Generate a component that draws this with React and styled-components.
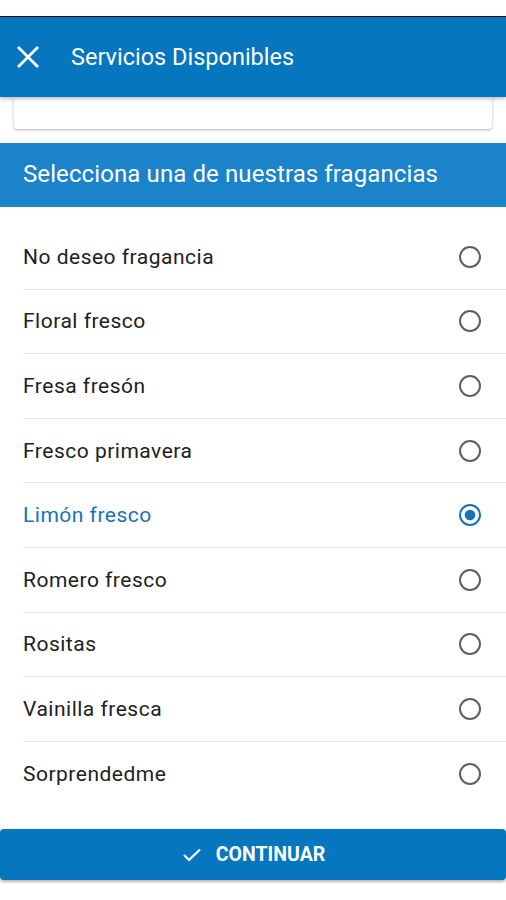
import React, { useState } from 'react';
import styled, { createGlobalStyle } from 'styled-components';

const GlobalStyle = createGlobalStyle`
  html, body {
    margin: 0;
    padding: 0;
    background: #ffffff;
    font-family: Roboto, "Noto Sans", "Liberation Sans", sans-serif;
  }
  * { box-sizing: border-box; }
`;

const Screen = styled.div`
  width: 506px;
  height: 900px;
  display: flex;
  flex-direction: column;
  background: #ffffff;
  overflow: hidden;
`;

const StatusGap = styled.div`
  height: 17px;
  border-bottom: 1.5px solid #111;
  flex-shrink: 0;
`;

const AppBar = styled.header`
  height: 80px;
  background: #0676be;
  display: flex;
  align-items: center;
  padding: 0 17px;
  gap: 32px;
  position: relative;
  z-index: 2;
  box-shadow: 0 2px 4px rgba(0, 0, 0, 0.25);
  flex-shrink: 0;
`;

const Title = styled.h1`
  margin: 0;
  color: #ffffff;
  font-size: 23.5px;
  font-weight: 400;
`;

const Card = styled.div`
  margin: 0 14px;
  height: 32px;
  background: #ffffff;
  border-radius: 0 0 4px 4px;
  box-shadow: 0 1px 3px rgba(0, 0, 0, 0.3);
  flex-shrink: 0;
`;

const SectionHeader = styled.div`
  margin-top: 14px;
  height: 64px;
  background: #1a83c9;
  display: flex;
  align-items: center;
  padding: 0 23px 2px;
  color: #ffffff;
  font-size: 24px;
  letter-spacing: 0.1px;
  flex-shrink: 0;
`;

const List = styled.ul`
  list-style: none;
  margin: 0;
  padding: 18px 0 0 23px;
`;

const Row = styled.li`
  height: 64.6px;
  display: flex;
  align-items: center;
  justify-content: space-between;
  padding: 0 24px 0 0;
  border-bottom: ${({ $last }) => ($last ? 'none' : '1.5px solid #e4e4e4')};
  cursor: pointer;
`;

const Label = styled.span`
  font-size: 21px;
  color: ${({ $active }) => ($active ? '#1673b9' : '#212121')};
  letter-spacing: 0.5px;
`;

const Footer = styled.div`
  margin-top: auto;
  padding-bottom: 20px;
`;

const Button = styled.button`
  width: 100%;
  height: 51px;
  border: none;
  border-radius: 4px;
  background: #0676be;
  color: #ffffff;
  display: flex;
  align-items: center;
  justify-content: center;
  gap: 15px;
  padding-right: 4px;
  font-family: Roboto, "Liberation Sans", sans-serif;
  font-size: 19.5px;
  font-weight: 700;
  box-shadow: 0 2px 3px rgba(0, 0, 0, 0.3);
`;

const CloseIcon = () => (
  <svg width="22" height="22" viewBox="0 0 22 22">
    <path d="M2 2 L20 20 M20 2 L2 20" stroke="#fff" strokeWidth="2.8" strokeLinecap="square" />
  </svg>
);

const CheckIcon = () => (
  <svg width="18" height="14" viewBox="0 0 18 14">
    <path d="M1 7 L6 12 L17 1.5" stroke="#fff" strokeWidth="2.2" fill="none" />
  </svg>
);

const Radio = ({ checked }) => (
  <svg width="24" height="24" viewBox="0 0 24 24">
    <circle cx="12" cy="12" r="10" fill="none" stroke={checked ? '#1673b9' : '#5f5f5f'} strokeWidth="2" />
    {checked && <circle cx="12" cy="12" r="5.3" fill="#1673b9" />}
  </svg>
);

const fragrances = [
  'No deseo fragancia',
  'Floral fresco',
  'Fresa fresón',
  'Fresco primavera',
  'Limón fresco',
  'Romero fresco',
  'Rositas',
  'Vainilla fresca',
  'Sorprendedme',
];

export default function App() {
  const [selected, setSelected] = useState('Limón fresco');

  return (
    <Screen>
      <GlobalStyle />
      <StatusGap />
      <AppBar>
        <CloseIcon />
        <Title>Servicios Disponibles</Title>
      </AppBar>
      <Card />
      <SectionHeader>Selecciona una de nuestras fragancias</SectionHeader>
      <List>
        {fragrances.map((name, i) => (
          <Row key={name} $last={i === fragrances.length - 1} onClick={() => setSelected(name)}>
            <Label $active={selected === name}>{name}</Label>
            <Radio checked={selected === name} />
          </Row>
        ))}
      </List>
      <Footer>
        <Button>
          <CheckIcon />
          CONTINUAR
        </Button>
      </Footer>
    </Screen>
  );
}
